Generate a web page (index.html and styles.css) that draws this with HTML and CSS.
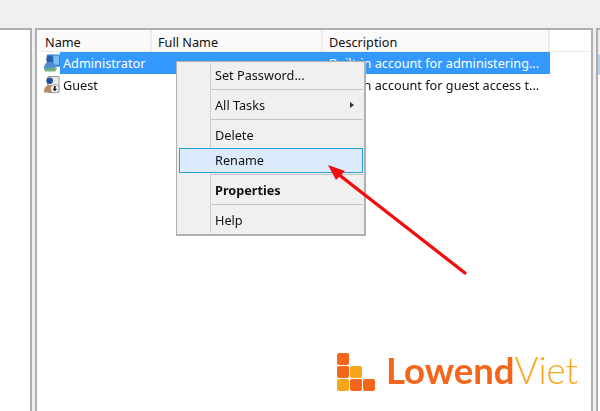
FILE: index.html
```html
<!DOCTYPE html>
<html lang="en">
<head>
    <meta charset="UTF-8">
    <meta name="viewport" content="width=device-width, initial-scale=1.0">
    <title>Local Users</title>
    <link rel="stylesheet" href="styles.css">
</head>
<body>
    <div class="toolbar"></div>
    <div class="panes">
        <div class="pane tree"></div>
        <div class="pane list">
            <div class="list-head">
                <div class="col col-name">Name</div>
                <div class="col col-full">Full Name</div>
                <div class="col col-desc">Description</div>
            </div>
            <div class="row">
                <svg class="user-icon" width="18" height="20" viewBox="0 0 18 20">
                    <rect x="4" y="1" width="14" height="13" rx="1" fill="#2f7fd6"/>
                    <rect x="11" y="2" width="6" height="10" fill="#7dbcf0"/>
                    <circle cx="7" cy="6" r="3.500" fill="#2b5ea8"/>
                    <path d="M1 16c0-5 3-7 6-7s6 2 7 4l-2 4H3z" fill="#4f8fc9"/>
                    <path d="M1 16l14-1-2 4H2z" fill="#74b17c"/>
                </svg>
                <div class="cell-name selected">Administrator</div>
                <div class="cell-full selected"></div>
                <div class="cell-desc selected">Built-in account for administering...</div>
            </div>
            <div class="row">
                <svg class="user-icon" width="18" height="20" viewBox="0 0 18 20">
                    <rect x="5" y="1" width="12" height="17" rx="1" fill="#e8e8e8" stroke="#8a8a8a"/>
                    <circle cx="7" cy="5.500" r="3.500" fill="#23509c"/>
                    <path d="M1 18c0-6 3-8 6-8s5 2 5 8z" fill="#b98a5e"/>
                    <circle cx="12.500" cy="14" r="4.500" fill="#f5f5f5" stroke="#999"/>
                    <path d="M11.500 11h2v3h1.500l-2.500 3-2.500-3h1.500z" fill="#222"/>
                </svg>
                <div class="cell-name">Guest</div>
                <div class="cell-full"></div>
                <div class="cell-desc">Built-in account for guest access t...</div>
            </div>
        </div>
        <div class="pane actions">
            <div class="actions-head"></div>
            <div class="actions-title"></div>
        </div>
    </div>

    <div class="menu">
        <div class="menu-item">Set Password...</div>
        <div class="menu-sep"></div>
        <div class="menu-item has-sub">All Tasks</div>
        <div class="menu-sep"></div>
        <div class="menu-item">Delete</div>
        <div class="menu-item active">Rename</div>
        <div class="menu-sep"></div>
        <div class="menu-item bold">Properties</div>
        <div class="menu-sep"></div>
        <div class="menu-item">Help</div>
    </div>

    <svg class="arrow" width="150" height="120" viewBox="0 0 150 120">
        <line x1="140" y1="113" x2="13" y2="14" stroke="#f20d0d" stroke-width="3.400" stroke-linecap="round"/>
        <path d="M3 5L20 11 11 20z" fill="#f20d0d"/>
    </svg>

    <div class="logo">
        <svg class="logo-mark" width="38" height="38" viewBox="0 0 38 38">
            <rect x="0" y="0" width="12" height="12" rx="2" fill="#f4661b"/>
            <rect x="0" y="13" width="12" height="12" rx="2" fill="#f4661b"/>
            <rect x="13" y="13" width="12" height="12" rx="2" fill="#f9a51a"/>
            <rect x="0" y="26" width="12" height="12" rx="2" fill="#f9a51a"/>
            <rect x="13" y="26" width="12" height="12" rx="2" fill="#f4661b"/>
            <rect x="26" y="26" width="12" height="12" rx="2" fill="#f4661b"/>
        </svg>
        <div class="logo-text"><span class="logo-bold">Lowend</span><span class="logo-thin">Viet</span></div>
    </div>
</body>
</html>
```

FILE: styles.css
```css
body {
    margin: 0;
    width: 600px;
    height: 411px;
    overflow: hidden;
    background-color: #f0f0f0;
    font-family: "Noto Sans", sans-serif;
    font-size: 12.700px;
    color: #111111;
    position: relative;
    filter: blur(0.3px);
}
.toolbar {
    height: 28px;
}
.panes {
    display: flex;
    height: 383px;
}
.pane {
    background: #ffffff;
    border: 2px solid #aeaeae;
    border-bottom: none;
    box-sizing: border-box;
}
.tree {
    width: 32px;
    border-left: none;
    margin-right: 3px;
}
.list {
    width: 558px;
    padding-left: 1px;
    margin-right: 3px;
}
.actions {
    flex: 1;
    border-right: none;
}
.actions-head {
    height: 25px;
    background: #ececec;
}
.actions-title {
    height: 20px;
    background: #b7d2ea;
}
.list-head {
    display: flex;
    height: 22px;
    border-bottom: 1px solid #ececec;
    box-sizing: border-box;
}
.col {
    box-sizing: border-box;
    padding: 3px 0 0 7px;
    background: #fafafa;
    border-right: 2px solid #ececec;
    line-height: 18px;
}
.col-name {
    width: 114px;
}
.col-full {
    width: 171px;
    padding-left: 6px;
}
.col-desc {
    width: 227px;
    padding-left: 6px;
}
.row {
    display: flex;
    height: 22px;
    line-height: 22px;
}
.user-icon {
    width: 17px;
    height: 20px;
    margin: 1px 0 0 5px;
    flex: none;
}
.cell-name {
    width: 92px;
    padding-left: 3px;
    box-sizing: border-box;
}
.cell-full {
    width: 171px;
}
.cell-desc {
    width: 227px;
    padding-left: 6px;
    box-sizing: border-box;
    white-space: nowrap;
}
.selected {
    background: #3399ff;
    color: #ffffff;
}
.menu {
    position: absolute;
    left: 176px;
    top: 61px;
    width: 190px;
    height: 175px;
    box-sizing: border-box;
    padding: 1px 1px 0 2px;
    background: #f0f0f0;
    border: 1px solid #b0b0b0;
    border-width: 1px 2px 2px 1px;
}
.menu-item {
    position: relative;
    height: 25px;
    padding-left: 36px;
    line-height: 25px;
    box-sizing: border-box;
    background: linear-gradient(#cfcfcf, #cfcfcf) 31px 0 / 1px 100% no-repeat;
}
.menu-sep {
    height: 5px;
    background: linear-gradient(#c4c4c4, #c4c4c4) 32px 1px / 100% 1px no-repeat, linear-gradient(#cfcfcf, #cfcfcf) 31px 0 / 1px 100% no-repeat;
}
.has-sub::after {
    content: "";
    position: absolute;
    right: 9px;
    top: 9px;
    border-left: 4px solid #333;
    border-top: 3.500px solid transparent;
    border-bottom: 3.500px solid transparent;
}
.active {
    background: #dbeafd;
    border: 1px solid #26a0da;
    padding-left: 35px;
    line-height: 23px;
}
.bold {
    font-weight: 700;
}
.arrow {
    position: absolute;
    left: 325px;
    top: 160px;
}
.logo {
    position: absolute;
    left: 337px;
    top: 353px;
    display: flex;
    gap: 11px;
    font-family: "Lato", sans-serif;
    font-size: 36.500px;
    line-height: 38px;
}
.logo-mark {
    flex: none;
}
.logo-text {
    margin-top: -2px;
}
.logo-bold {
    font-weight: 700;
    color: #f4661b;
}
.logo-thin {
    font-weight: 300;
    color: #f9a51a;
}
```
